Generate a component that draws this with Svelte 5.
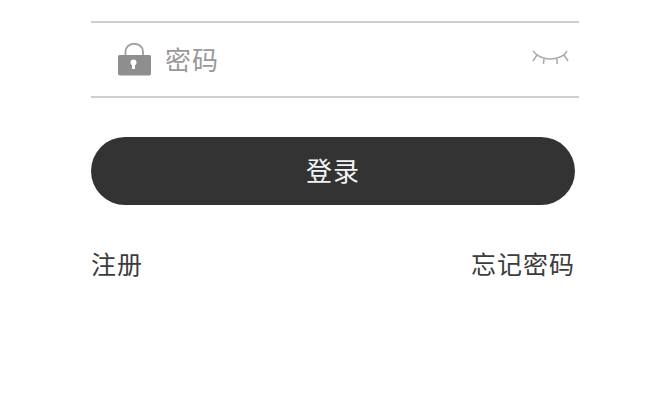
<script>
  let password = "";
</script>

<main>
  <div class="field clipped"></div>

  <div class="field">
    <svg class="lock" width="33" height="33" viewBox="0 0 33 33" aria-hidden="true">
      <path d="M7.5 13V8.5a8.5 7.5 0 0 1 17.500 0V13" fill="none" stroke="#a0a0a0" stroke-width="1.800"/>
      <path d="M0 13.500a1.500 1.500 0 0 1 1.500-1.500h30a1.500 1.500 0 0 1 1.500 1.500V30.500a2 2 0 0 1-2 2H2a2 2 0 0 1-2-2z" fill="#8e8e8e"/>
      <circle cx="15.500" cy="19.500" r="3" fill="#fff"/>
      <rect x="14" y="20" width="3" height="6" fill="#fff"/>
    </svg>
    <input bind:value={password} type="password" placeholder="密码" />
    <svg class="eye" width="40" height="20" viewBox="0 0 40 20" aria-hidden="true">
      <path d="M7 7Q20 15 34 7" fill="none" stroke="#aaa" stroke-width="1.500"/>
      <path d="M3 3L7 7L3 13M37 3L34 7L38 13M14 11L13.500 16M27 11L27 16" fill="none" stroke="#aaa" stroke-width="1.500"/>
    </svg>
  </div>

  <button>登录</button>

  <div class="links">
    <span>注册</span>
    <span>忘记密码</span>
  </div>
</main>

<style>
  :global(body) {
    margin: 0;
    background: #fff;
    font-family: "Noto Sans CJK SC", "Liberation Sans", sans-serif;
  }

  main {
    width: 670px;
    height: 415px;
    overflow: hidden;
    box-sizing: border-box;
    padding: 0 91px;
  }

  .field {
    width: 488px;
    height: 75px;
    box-sizing: border-box;
    border-bottom: 2px solid #cfcfcf;
    display: flex;
    align-items: center;
    padding-left: 27px;
  }

  .clipped {
    height: 23px;
  }

  .lock {
    margin-right: 14px;
    flex: none;
  }

  input {
    flex: 1;
    min-width: 0;
    border: none;
    outline: none;
    background: none;
    padding: 0;
    font: inherit;
    font-size: 26px;
    letter-spacing: 1px;
    line-height: 36px;
    height: 36px;
    margin-top: -1px;
  }

  input::placeholder {
    color: #999;
    opacity: 1;
  }

  .eye {
    flex: none;
    margin-right: 9px;
    margin-top: -3px;
  }

  button {
    display: block;
    width: 484px;
    height: 68px;
    margin-top: 39px;
    padding: 0 0 4px;
    border: none;
    border-radius: 34px;
    background: #333;
    color: #f4f4f4;
    font: inherit;
    font-size: 26px;
    letter-spacing: 1px;
  }

  .links {
    width: 484px;
    display: flex;
    justify-content: space-between;
    margin-top: 40px;
    font-size: 25px;
    letter-spacing: 1px;
    line-height: 36px;
    color: #3c3c3c;
  }
</style>
